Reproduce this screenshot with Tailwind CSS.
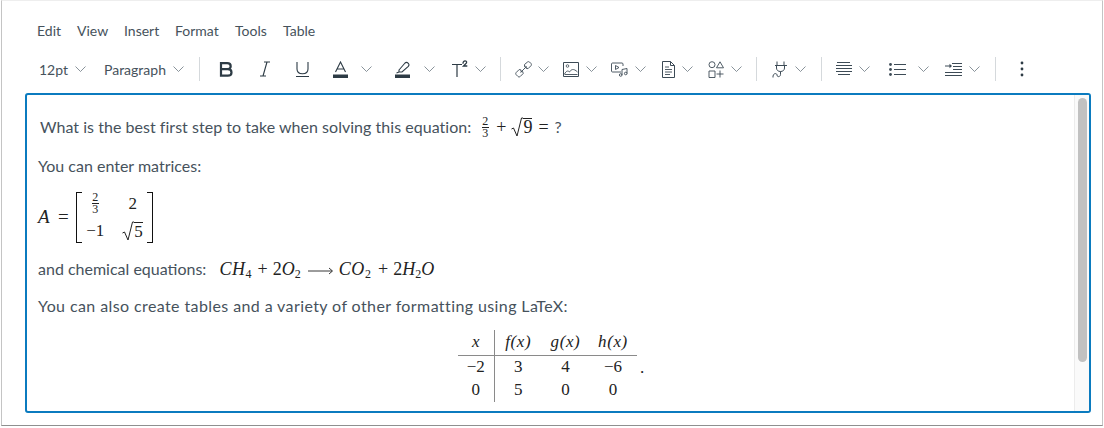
<!DOCTYPE html>
<html lang="en">
<head>
<meta charset="UTF-8">
<title>Rich Content Editor</title>
<script src="https://cdn.jsdelivr.net/npm/@tailwindcss/browser@4"></script>
</head>
<body class="bg-white w-[1104px] h-[428px] overflow-hidden font-['Lato',sans-serif] text-[#2d3b45]">
<svg class="hidden">
  <symbol id="chev" viewBox="0 0 11 6"><path d="M.5.5l5 5 5-5" fill="none" stroke="#6b7780" stroke-width=".8"/></symbol>
</svg>
<div class="w-[1102px] h-[426px] ml-px border-l border-r border-b border-t border-l-[#c4c4c4] border-r-[#c4c4c4] border-b-[#8f8f8f] border-t-[#eeeeee] flex flex-col">
  <!-- Menu bar -->
  <div class="flex h-[20px] mt-[20px] pl-[35px] text-[14px] leading-[20px] text-[#46525c]">
    <span class="w-[40px]">Edit</span>
    <span class="w-[47px]">View</span>
    <span class="w-[51px]">Insert</span>
    <span class="w-[60px]">Format</span>
    <span class="w-[48px]">Tools</span>
    <span>Table</span>
  </div>

  <!-- Toolbar -->
  <div class="flex items-center h-[24px] mt-[16px] pl-[37px] text-[14px] text-[#46525c]">
    <span class="w-[29px]">12pt</span>
    <svg class="w-[11px] h-[6px] ml-[7px]"><use href="#chev"/></svg>
    <span class="ml-[18px] w-[62px] whitespace-nowrap">Paragraph</span>
    <svg class="w-[11px] h-[6px] ml-[7px]"><use href="#chev"/></svg>
    <span class="w-px h-[24px] ml-[15px] bg-[#d5d9dc]"></span>

    <svg class="w-[15px] h-[15px] ml-[19px]" viewBox="0 0 15 15"><path d="M2 1.200h6.200c2.200 0 3.500 1.200 3.500 3s-1.300 3-3.500 3H2zM2 7.200h6.800c2.400 0 3.700 1.300 3.700 3.200s-1.300 3.300-3.700 3.300H2z" fill="none" stroke="#2d3b45" stroke-width="2.200"/></svg>
    <svg class="w-[14px] h-[16px] ml-[24px]" viewBox="0 0 14 16"><path d="M6 1h6M2 15h6M9 1L5 15" fill="none" stroke="#2d3b45" stroke-width="1.100"/></svg>
    <svg class="w-[15px] h-[16px] ml-[23px]" viewBox="0 0 15 16"><path d="M2 1v7c0 3 2 4.700 5.500 4.700S13 11 13 8V1M1 15.500h13" fill="none" stroke="#2d3b45" stroke-width="1.100"/></svg>
    <svg class="w-[15px] h-[17px] ml-[23px]" viewBox="0 0 15 17"><path d="M2.500 11L7.500 1l5 10M4 8h7" fill="none" stroke="#2d3b45" stroke-width="1.100"/><path d="M0 13.500h15V17H0z" fill="#2d3b45"/></svg>
    <svg class="w-[11px] h-[6px] ml-[13px]"><use href="#chev"/></svg>
    <svg class="w-[15px] h-[17px] ml-[23px]" viewBox="0 0 15 17"><path d="M4 9l6-7c1-1 2.500-.5 3.300.3s.8 2 0 3L7 11H4z M1.500 12l2.500-1" fill="none" stroke="#2d3b45" stroke-width="1.100"/><path d="M0 13.500h15V17H0z" fill="#2d3b45"/></svg>
    <svg class="w-[11px] h-[6px] ml-[14px]"><use href="#chev"/></svg>
    <span class="ml-[17px] w-[17px] h-[18px] flex">
      <svg class="w-[17px] h-[18px]" viewBox="0 0 17 18"><path d="M0 4.500h10M5 4.500V17" fill="none" stroke="#2d3b45" stroke-width="1.200"/><path d="M11 5.800c0-2 .6-3 2.200-3s2 2 .5 3L11.500 8h3.800" fill="none" stroke="#2d3b45" stroke-width="1.300" transform="translate(0,-2)"/></svg>
    </span>
    <svg class="w-[11px] h-[6px] ml-[6px]"><use href="#chev"/></svg>
    <span class="w-px h-[24px] ml-[14px] bg-[#d5d9dc]"></span>

    <svg class="w-[17px] h-[17px] ml-[14px]" viewBox="0 0 17 17"><path d="M1.200 11.500l3-3 2 .5-.5 1 1 1 1-.5.5 2-3 3c-.8.6-1.500.6-2.200 0l-1.800-1.800c-.6-.7-.6-1.500 0-2.200zM9.500 3.500l3-2.500c.7-.5 1.500-.5 2 0l1.500 1.500c.5.700.5 1.500 0 2.200l-3 3-2-.5.500-1-1-1-1 .5z" fill="none" stroke="#3d4b56" stroke-width=".9"/><path d="M5.500 11.500l6-6" stroke="#3d4b56" stroke-width=".9"/></svg>
    <svg class="w-[11px] h-[6px] ml-[6px]"><use href="#chev"/></svg>
    <svg class="w-[16px] h-[15px] ml-[14px]" viewBox="0 0 16 15"><path d="M.5.500h15v14H.5z" fill="none" stroke="#3d4b56"/><circle cx="4.500" cy="4" r="1.300" fill="none" stroke="#3d4b56" stroke-width=".8"/><path d="M1.500 12c2-3.500 3.500-3.500 5-2 1.500-2.500 4-4 8 0M1.500 12.500h13" fill="none" stroke="#3d4b56" stroke-width=".9"/></svg>
    <svg class="w-[11px] h-[6px] ml-[7px]"><use href="#chev"/></svg>
    <svg class="w-[17px] h-[15px] ml-[14px]" viewBox="0 0 17 15"><path d="M10 10H1.500C.8 10 .5 9.500.5 9V2C.5 1.300 1 1 1.500 1H11c.7 0 1 .5 1 1v2" fill="none" stroke="#3d4b56" stroke-width=".9"/><path d="M4.500 3.500v4l3.500-2z" fill="none" stroke="#3d4b56" stroke-width=".9"/><path d="M11 13V7.500l5-1v5" fill="none" stroke="#3d4b56" stroke-width=".9"/><circle cx="9.700" cy="13" r="1.300" fill="none" stroke="#3d4b56" stroke-width=".9"/><circle cx="14.700" cy="11.500" r="1.300" fill="none" stroke="#3d4b56" stroke-width=".9"/></svg>
    <svg class="w-[11px] h-[6px] ml-[7px]"><use href="#chev"/></svg>
    <svg class="w-[13px] h-[17px] ml-[16px]" viewBox="0 0 13 17"><path d="M.5.500h8l4 4v12H.5zM8.500.500v4h4" fill="none" stroke="#3d4b56"/><path d="M3 6h4M3 8.500h7M3 11h7M3 13.500h5" stroke="#3d4b56" stroke-width=".9"/></svg>
    <svg class="w-[11px] h-[6px] ml-[7px]"><use href="#chev"/></svg>
    <svg class="w-[17px] h-[17px] ml-[15px]" viewBox="0 0 17 17"><circle cx="4" cy="3.700" r="3" fill="none" stroke="#3d4b56" stroke-width=".9"/><path d="M12 .8l3.500 6h-7zM1 10h6v6.500H1zM12 9.500v7M8.500 13h7" fill="none" stroke="#3d4b56" stroke-width=".9"/></svg>
    <svg class="w-[11px] h-[6px] ml-[6px]"><use href="#chev"/></svg>
    <span class="w-px h-[24px] ml-[14px] bg-[#d5d9dc]"></span>

    <svg class="w-[16px] h-[17px] ml-[15px]" viewBox="0 0 16 17"><path d="M3 4.500h12M5 .5v4M12 .5v4M4.500 4.500v2.500c0 2 1.500 3.500 4 3.500s4-1.500 4-3.500V4.500M8.500 10.500v3c0 2.500-3.500 3-3.500.5 0-2-3.500-2-4 1v1.500" fill="none" stroke="#3d4b56" stroke-width="1"/></svg>
    <svg class="w-[11px] h-[6px] ml-[7px]"><use href="#chev"/></svg>
    <span class="w-px h-[24px] ml-[15px] bg-[#d5d9dc]"></span>

    <svg class="w-[16px] h-[14px] ml-[14px]" viewBox="0 0 16 14"><path d="M1 .5h13M0 3.500h16M0 6.500h16M0 9.500h16M2 12.500h12" stroke="#3d4b56" stroke-width="1"/></svg>
    <svg class="w-[11px] h-[6px] ml-[7px]"><use href="#chev"/></svg>
    <svg class="w-[17px] h-[13px] ml-[19px]" viewBox="0 0 17 13"><path d="M5 1.500h12M5 6.500h12M5 11.500h12" stroke="#3d4b56" stroke-width="1"/><circle cx="1.500" cy="1.500" r="1.400" fill="#3d4b56"/><circle cx="1.500" cy="6.500" r="1.400" fill="#3d4b56"/><circle cx="1.500" cy="11.500" r="1.400" fill="#3d4b56"/></svg>
    <svg class="w-[11px] h-[6px] ml-[12px]"><use href="#chev"/></svg>
    <svg class="w-[17px] h-[13px] ml-[16px]" viewBox="0 0 17 13"><path d="M7 .5h10M8 3.500h9M8 6.500h9M0 9.500h17M0 12.500h17M0 3h5" fill="none" stroke="#3d4b56" stroke-width="1"/><path d="M4.500 .8L7 3 4.500 5.200z" fill="#3d4b56"/></svg>
    <svg class="w-[11px] h-[6px] ml-[7px]"><use href="#chev"/></svg>
    <span class="w-px h-[24px] ml-[15px] bg-[#d5d9dc]"></span>
    <svg class="w-[4px] h-[16px] ml-[24px]" viewBox="0 0 4 16"><circle cx="2" cy="2" r="1.400" fill="#2d3b45"/><circle cx="2" cy="8" r="1.400" fill="#2d3b45"/><circle cx="2" cy="14" r="1.400" fill="#2d3b45"/></svg>
  </div>

  <!-- Editor area -->
  <div class="relative w-[1066px] h-[320px] ml-[23px] mt-[12px] border-2 border-[#0b7bbf] rounded-[3px] overflow-hidden pl-[11px] text-[16px] text-[#46525c]">
    <div class="absolute right-0 top-0 w-[15px] h-full bg-[#fafafa] border-l border-[#ececec]">
      <div class="w-[9px] h-[264px] mt-[3px] ml-[3px] bg-[#c1c1c1] rounded-[5px]"></div>
    </div>

    <p class="flex items-center h-[24px] mt-[20px] ml-[2px]">
      <span class="tracking-[0.03px]">What is the best first step to take when solving this equation:</span>
      <span class="flex items-center ml-[10px] font-['Liberation_Serif',serif] text-[18px] text-[#222]">
        <span class="inline-flex flex-col items-center text-[12px] leading-[11px] w-[8px]"><span>2</span><span class="w-[7px] h-px bg-[#222]"></span><span>3</span></span>
        <span class="ml-[7px]">+</span>
        <svg class="w-[12px] h-[20px] ml-[5px]" viewBox="0 0 12 20"><path d="M.5 12l2-1 3.500 8L10.500 1H12" fill="none" stroke="#222"/></svg>
        <span class="border-t border-[#222] leading-[17px] w-[9px]">9</span>
        <span class="ml-[6px]">=</span>
        <span class="ml-[6px] font-['Lato',sans-serif] text-[16px] text-[#46525c]">?</span>
      </span>
    </p>

    <p class="h-[24px] leading-[24px] mt-[15px]">You can enter matrices:</p>

    <div class="flex items-center h-[54px] mt-[12px] font-['Liberation_Serif',serif] text-[19px] text-[#222]">
      <span class="italic w-[15px]">A</span>
      <span class="ml-[5px]">=</span>
      <div class="ml-[7px] w-[77px] h-[51px] border-l border-r border-[#111] relative grid grid-cols-[37px_1fr] grid-rows-[24px_27px] items-center justify-items-center">
        <span class="absolute left-0 top-0 w-[5px] h-px bg-[#111]"></span>
        <span class="absolute left-0 bottom-0 w-[5px] h-px bg-[#111]"></span>
        <span class="absolute right-0 top-0 w-[5px] h-px bg-[#111]"></span>
        <span class="absolute right-0 bottom-0 w-[5px] h-px bg-[#111]"></span>
        <span class="inline-flex flex-col items-center text-[12px] leading-[11px]"><span>2</span><span class="w-[7px] h-px bg-[#222]"></span><span>3</span></span>
        <span class="text-[17px]">2</span>
        <span class="text-[17px] pt-[4px]">−1</span>
        <span class="flex items-center text-[17px] pt-[3px]">
          <svg class="w-[12px] h-[20px]" viewBox="0 0 12 20"><path d="M.5 12l2-1 3.500 8L10.500 1H12" fill="none" stroke="#222"/></svg>
          <span class="border-t border-[#222] leading-[17px] w-[9px]">5</span>
        </span>
      </div>
    </div>

    <p class="flex items-center h-[24px] mt-[13px]">
      <span>and chemical equations:</span>
      <span class="ml-[13px] font-['Liberation_Serif',serif] text-[18px] text-[#222] flex items-baseline">
        <span class="italic tracking-[0.6px]">CH</span><sub class="text-[12px] leading-none">4</sub>
        <span class="ml-[6px]">+</span>
        <span class="ml-[5px]">2<span class="italic">O</span></span><sub class="text-[12px] leading-none">2</sub>
        <svg class="w-[25px] h-[8px] ml-[7px] mr-[6px]" viewBox="0 0 25 8"><path d="M0 4h24M21 1l3.500 3L21 7" fill="none" stroke="#222" stroke-width=".9"/></svg>
        <span class="italic tracking-[0.6px]">CO</span><sub class="text-[12px] leading-none">2</sub>
        <span class="ml-[7px]">+</span>
        <span class="ml-[5px]">2<span class="italic">H</span></span><sub class="text-[12px] leading-none">2</sub><span class="italic">O</span>
      </span>
    </p>

    <p class="h-[24px] leading-[24px] mt-[13px] tracking-[0.4px]">You can also create tables and a variety of other formatting using LaTeX:</p>

    <div class="flex items-end ml-[420px] mt-[12px] font-['Liberation_Serif',serif] text-[17px] leading-[20px] text-[#222]">
      <table class="border-collapse text-center">
        <tr class="h-[25px] border-b border-[#8a8a8a]">
          <td class="w-[36px] border-r border-[#8a8a8a] italic">x</td>
          <td class="w-[48px] italic tracking-[0.6px]">f(x)</td>
          <td class="w-[47px] italic tracking-[0.6px]">g(x)</td>
          <td class="w-[48px] italic tracking-[0.6px]">h(x)</td>
        </tr>
        <tr class="h-[23px]">
          <td class="border-r border-[#8a8a8a]">−2</td>
          <td>3</td>
          <td>4</td>
          <td>−6</td>
        </tr>
        <tr class="h-[24px]">
          <td class="border-r border-[#8a8a8a]">0</td>
          <td>5</td>
          <td>0</td>
          <td>0</td>
        </tr>
      </table>
      <span class="ml-[3px] mb-[24px]">.</span>
    </div>
  </div>
</div>
</body>
</html>
